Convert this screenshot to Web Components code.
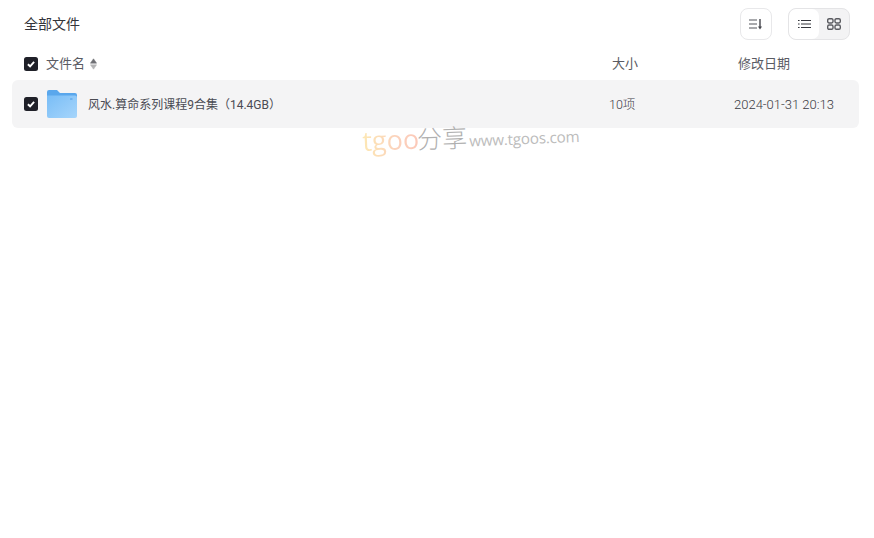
<!DOCTYPE html>
<html>
<head>
<meta charset="utf-8">
<style>
html,body{margin:0;background:#fff;}
body{width:874px;height:538px;overflow:hidden;font-family:"Noto Sans CJK SC","Liberation Sans",sans-serif;position:relative;}
</style>
</head>
<body>
<file-list>
    <list-toolbar></list-toolbar>
    <list-header></list-header>
    <file-row name="风水.算命系列课程9合集（14.4GB）" size="10项" date="2024-01-31 20:13"></file-row>
</file-list>
<water-mark></water-mark>
<script>
const fontStack = '"Roboto","Noto Sans CJK SC",sans-serif';
const checkSvg = `<svg width="14" height="14" viewBox="0 0 14 14"><rect width="14" height="14" rx="2.5" fill="#1f2028"/><path d="M3.9 7.2l2.2 2.1 4-4.4" fill="none" stroke="#fff" stroke-width="1.9"/></svg>`;

class FileList extends HTMLElement{
    constructor(){
        super();
        this.attachShadow({mode:'open'}).innerHTML = `
        <style>
            :host{display:block;padding:8px 15px 0 12px;font-family:${fontStack};}
        </style>
        <slot></slot>`;
    }
}

class ListToolbar extends HTMLElement{
    constructor(){
        super();
        this.attachShadow({mode:'open'}).innerHTML = `
        <style>
            :host{display:flex;align-items:center;height:32px;padding:0 9px 0 12px;}
            .title{flex:1;font-size:14px;line-height:16px;padding-bottom:1px;color:#33343a;}
            .btn{box-sizing:border-box;width:32px;height:32px;border:1px solid #e8e8ea;border-radius:8px;display:flex;align-items:center;justify-content:center;}
            .switch{box-sizing:border-box;display:flex;width:62px;height:32px;margin-left:16px;border:1px solid #e4e4e6;border-radius:8px;background:#f3f3f4;overflow:hidden;}
            .switch span{flex:1;display:flex;align-items:center;justify-content:center;}
            .switch .on{background:#fff;border-radius:7px;}
            svg{display:block;}
        </style>
        <div class="title">全部文件</div>
        <div class="btn">
            <svg width="14" height="12" viewBox="0 0 14 12"><path d="M0 2h8M0 6h8M0 10h8" stroke="#55565c" stroke-width="1.2" fill="none"/><path d="M11 1v9" stroke="#45464c" stroke-width="1.4"/><path d="M9 8.6h4L11 11.4z" fill="#45464c"/></svg>
        </div>
        <div class="switch">
            <span class="on"><svg width="13" height="10" viewBox="0 0 13 10"><path d="M3 1.5h10M3 5h10M3 8.5h10M0 1.5h1.6M0 5h1.6M0 8.5h1.6" stroke="#35363c" stroke-width="1.2" fill="none"/></svg></span>
            <span><svg width="14" height="12" viewBox="0 0 14 12"><g fill="none" stroke="#5a5b60" stroke-width="1.4"><rect x=".7" y=".7" width="5.3" height="4.3" rx="1.4"/><rect x="8" y=".7" width="5.3" height="4.3" rx="1.4"/><rect x=".7" y="7" width="5.3" height="4.3" rx="1.4"/><rect x="8" y="7" width="5.3" height="4.3" rx="1.4"/></g></svg></span>
        </div>`;
    }
}

class ListHeader extends HTMLElement{
    constructor(){
        super();
        this.attachShadow({mode:'open'}).innerHTML = `
        <style>
            :host{display:flex;align-items:center;height:32px;margin-top:8px;padding-left:12px;font-size:13px;line-height:16px;color:#5a5b63;}
            .check{width:14px;height:14px;margin-right:8px;}
            .name{width:566px;display:flex;align-items:center;gap:5px;}
            .size{width:126px;}
            svg{display:block;}
        </style>
        <div class="check">${checkSvg}</div>
        <div class="name">文件名
            <svg width="7" height="12" viewBox="0 0 7 12"><path d="M3.5 .8L6.6 5.2H.4z" fill="#6f7074" stroke="#6f7074" stroke-width=".5" stroke-linejoin="round"/><path d="M3.5 11.2L6.6 6.8H.4z" fill="#b4b4b6" stroke="#b4b4b6" stroke-width=".5" stroke-linejoin="round"/></svg>
        </div>
        <div class="size">大小</div>
        <div>修改日期</div>`;
    }
}

class FileRow extends HTMLElement{
    constructor(){
        super();
        this.attachShadow({mode:'open'}).innerHTML = `
        <style>
            :host{display:flex;align-items:center;height:48px;padding-left:12px;background:#f4f4f5;border-radius:6px;font-size:12.5px;line-height:16px;color:#5a5b63;}
            .check{width:14px;height:14px;margin-right:9px;}
            .icon{width:30px;height:28px;margin-right:11px;}
            .name{width:521px;font-size:12px;padding-top:1px;color:#4a4b53;}
            .size{width:125px;padding-top:1px;font-weight:300;color:#3f4048;}
            .date{font-size:13px;padding-top:1px;font-weight:300;color:#3a3b43;}
            svg{display:block;}
        </style>
        <div class="check">${checkSvg}</div>
        <div class="icon">
            <svg width="30" height="28" viewBox="0 0 30 28">
                <defs><linearGradient id="f" x1="0" y1="0" x2="1" y2="1"><stop offset="0" stop-color="#79bdf6"/><stop offset="1" stop-color="#a6d5fb"/></linearGradient></defs>
                <path d="M0 2a2 2 0 012-2h8l3 3h15a2 2 0 012 2v3H0z" fill="#5aa7ec"/>
                <path d="M0 5.5h28a2 2 0 012 2V26a2 2 0 01-2 2H2a2 2 0 01-2-2z" fill="url(#f)"/>
                <rect x="23" y="8" width="2.5" height="2" rx=".6" fill="#6cb2f0"/>
            </svg>
        </div>
        <div class="name"></div>
        <div class="size"></div>
        <div class="date"></div>`;
    }
    connectedCallback(){
        const s = this.shadowRoot;
        s.querySelector('.name').textContent = this.getAttribute('name');
        s.querySelector('.size').textContent = this.getAttribute('size');
        s.querySelector('.date').textContent = this.getAttribute('date');
    }
}

// watermark sits over the page, slightly tilted
class WaterMark extends HTMLElement{
    constructor(){
        super();
        this.attachShadow({mode:'open'}).innerHTML = `
        <style>
            :host{position:absolute;left:363px;top:122px;display:flex;align-items:baseline;white-space:nowrap;font-family:"Open Sans",sans-serif;transform:rotate(-2.4deg);transform-origin:left bottom;}
            .t{font-size:27px;line-height:34px;background:linear-gradient(90deg,#fde8b4,#fbd2bc 60%,#fcc8b8);-webkit-background-clip:text;background-clip:text;color:transparent;}
            .c{font-size:25px;color:#b0b0b0;font-family:"Noto Sans CJK SC",sans-serif;font-weight:300;margin-left:-2px;}
            .u{font-size:15.2px;color:#bcbcbc;margin-left:2px;letter-spacing:-.2px;}
        </style>
        <span class="t">tgoo</span><span class="c">分享</span><span class="u">www.tgoos.com</span>`;
    }
}

customElements.define('file-list', FileList);
customElements.define('list-toolbar', ListToolbar);
customElements.define('list-header', ListHeader);
customElements.define('file-row', FileRow);
customElements.define('water-mark', WaterMark);
</script>
</body>
</html>
